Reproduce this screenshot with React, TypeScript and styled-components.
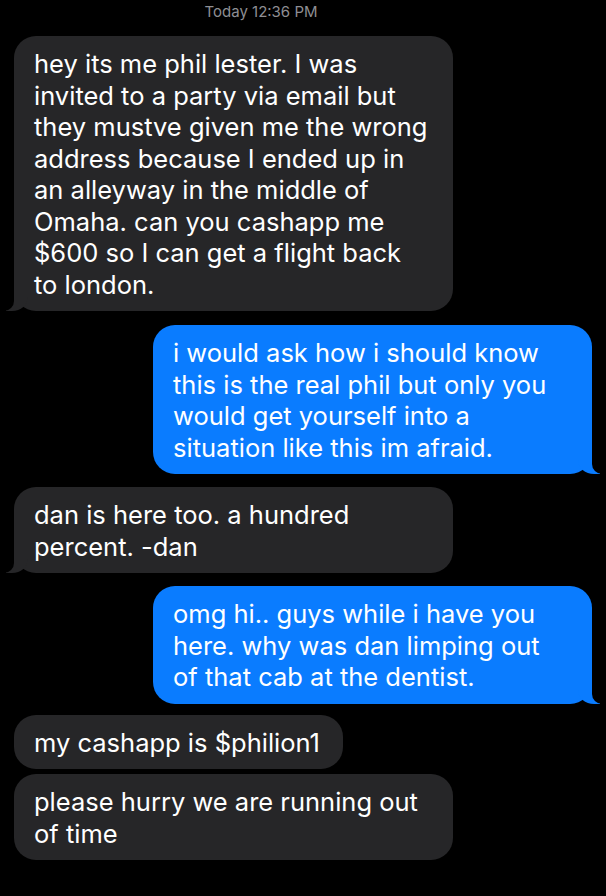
import { ReactElement } from "react";
import styled, { createGlobalStyle, css } from "styled-components";

const GlobalStyle = createGlobalStyle`
  html, body {
    margin: 0;
    padding: 0;
    background-color: #000000;
  }
  body {
    font-family: Inter, "Noto Sans", "Liberation Sans", sans-serif;
  }
`;

const Thread = styled.div`
  display: flex;
  flex-direction: column;
  padding: 0px 14px 0px 14px;
  width: 606px;
  height: 896px;
  box-sizing: border-box;
  background-color: #000000;
`;

const Timestamp = styled.div`
  display: flex;
  justify-content: center;
  padding: 2px 84px 0px 0px;
  height: 34px;
  box-sizing: border-box;
  color: #8e8e93;
  font-size: 15px;
  line-height: 19px;
`;

type Side = "them" | "me";

const Bubble = styled.div<{ $side: Side; $tail: boolean; $gap: number }>`
  position: relative;
  box-sizing: border-box;
  max-width: 439px;
  margin-top: ${props => props.$gap}px;
  padding: 12px 23px 11px 20px;
  border-radius: 22px;
  font-size: 25.5px;
  line-height: 31.5px;
  color: #ffffff;
  align-self: ${props => (props.$side === "me" ? "flex-end" : "flex-start")};
  background-color: ${props => (props.$side === "me" ? "#0a7cff" : "#262628")};

  ${props =>
    props.$tail &&
    props.$side === "them" &&
    css`
      &::before {
        content: "";
        position: absolute;
        bottom: 0px;
        left: -8px;
        width: 22px;
        height: 22px;
        background-color: #262628;
        border-bottom-right-radius: 16px 14px;
      }
      &::after {
        content: "";
        position: absolute;
        bottom: 0px;
        left: -26px;
        width: 26px;
        height: 22px;
        background-color: #000000;
        border-bottom-right-radius: 10px;
      }
    `}

  ${props =>
    props.$tail &&
    props.$side === "me" &&
    css`
      &::before {
        content: "";
        position: absolute;
        bottom: 0px;
        right: -8px;
        width: 22px;
        height: 22px;
        background-color: #0a7cff;
        border-bottom-left-radius: 16px 14px;
      }
      &::after {
        content: "";
        position: absolute;
        bottom: 0px;
        right: -26px;
        width: 26px;
        height: 22px;
        background-color: #000000;
        border-bottom-left-radius: 10px;
      }
    `}
`;

const BubbleText = styled.span`
  position: relative;
  z-index: 1;
`;

const messages: { side: Side; tail: boolean; gap: number; text: string }[] = [
  {
    side: "them",
    tail: true,
    gap: 2,
    text:
      "hey its me phil lester. I was invited to a party via email but they mustve given me the wrong address because I ended up in an alleyway in the middle of Omaha. can you cashapp me $600 so I can get a flight back to london.",
  },
  {
    side: "me",
    tail: true,
    gap: 14,
    text:
      "i would ask how i should know this is the real phil but only you would get yourself into a situation like this im afraid.",
  },
  { side: "them", tail: true, gap: 13, text: "dan is here too. a hundred percent. -dan" },
  {
    side: "me",
    tail: true,
    gap: 13,
    text: "omg hi.. guys while i have you here. why was dan limping out of that cab at the dentist.",
  },
  { side: "them", tail: false, gap: 11, text: "my cashapp is $philion1" },
  { side: "them", tail: false, gap: 5, text: "please hurry we are running out of time" },
];

function App(): ReactElement {
  return (
    <>
      <GlobalStyle />
      <Thread>
        <Timestamp>Today 12:36 PM</Timestamp>
        {messages.map((m, i) => (
          <Bubble key={i} $side={m.side} $tail={m.tail} $gap={m.gap}>
            <BubbleText>{m.text}</BubbleText>
          </Bubble>
        ))}
      </Thread>
    </>
  );
}

export default App;
